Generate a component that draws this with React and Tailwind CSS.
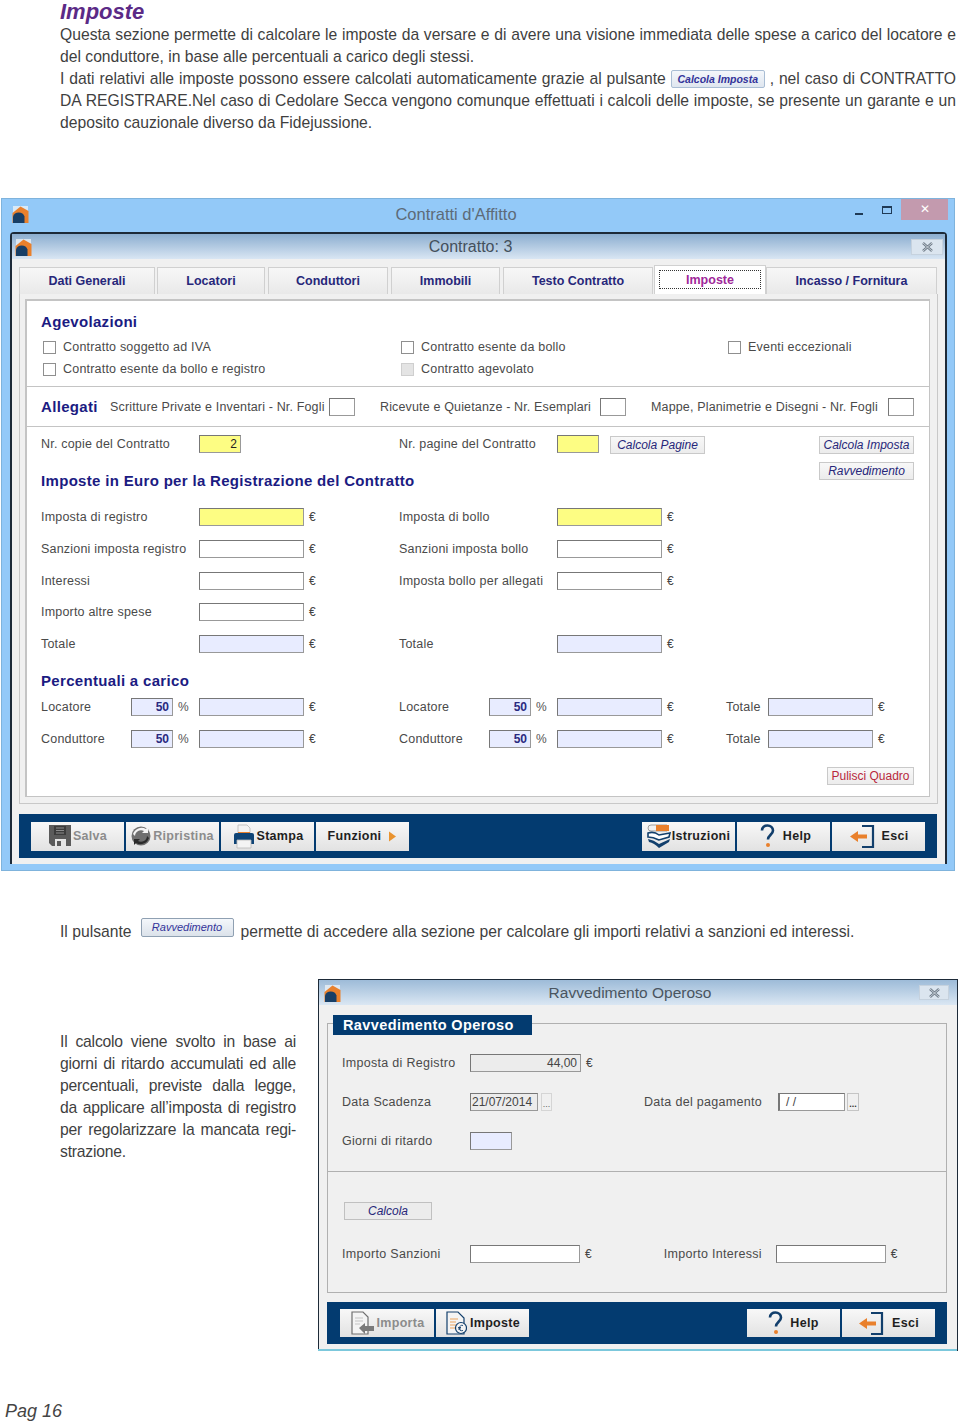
import React from "react";

const Home = () => (
  <svg width="17" height="18" viewBox="0 0 17 18" className="shrink-0">
    <path d="M1 1h15v16H1z" fill="#eef3f8" opacity="0.75" />
    <path d="M0.5 8 8.5 1.5 16.5 6V18H0.5Z" fill="#e9802c" />
    <path d="M1 18v-6.5a6 5.5 0 0 1 11.5 0V18Z" fill="#173e66" />
  </svg>
);

const Floppy = () => (
  <svg width="24" height="24" viewBox="0 0 24 24" className="shrink-0">
    <path d="M1 1h22v21H4l-3-3Z" fill="#5b5b5b" />
    <path d="M6 2h12v9H6Z" fill="#3c3c3c" />
    <path d="M8 4h8M8 6.5h8M8 9h8" stroke="#8c8c8c" strokeWidth="1" />
    <path d="M7 15h11v7H7Z" fill="#e6e6e6" />
    <path d="M9 17h4v5H9Z" fill="#5b5b5b" />
  </svg>
);

const Refresh = () => (
  <svg width="20" height="24" viewBox="0 0 20 24" className="shrink-0">
    <circle cx="10" cy="12" r="9.5" fill="#6f6f6f" />
    <path d="M4 12a6 6 0 0 1 9-5l-2 2h6V3l-2 2A9 9 0 0 0 2 10Z" fill="#f4f4f4" />
    <path d="M16 12a6 6 0 0 1-9 5l2-2H3v6l2-2a9 9 0 0 0 13-5Z" fill="#2b2b2b" />
  </svg>
);

const Printer = () => (
  <svg width="24" height="25" viewBox="0 0 24 25" className="shrink-0">
    <path d="M6 1h9l3 3v6H6Z" fill="#f4f4f4" stroke="#b9b9b9" strokeWidth="0.8" />
    <path d="M6 8h12v3H6Z" fill="#e9802c" />
    <path d="M2 11q0-2 2-2h16q2 0 2 2v9H2Z" fill="#0f4476" />
    <path d="M5 16h14v8H5Z" fill="#f4f4f4" stroke="#b9b9b9" strokeWidth="0.8" />
  </svg>
);

const Books = () => (
  <svg width="24" height="25" viewBox="0 0 24 25" className="shrink-0">
    <path d="M1 4q0-3 3-3h16v6H4Q1 7 1 4Z" fill="#f1f1f1" stroke="#8a8a8a" strokeWidth="0.8" />
    <path d="M9 1h13v6H9Z" fill="#e9802c" />
    <path d="M1 9q6-2 11 2l11-2-1 4-10 3Q6 13 1 13Z" fill="#ffffff" stroke="#123f6c" strokeWidth="1.6" />
    <path d="M1 15q6 1 11 5l11-5-1 3-10 6Q7 19 2 18Z" fill="#123f6c" />
  </svg>
);

const Question = () => (
  <svg width="15" height="24" viewBox="0 0 15 24" className="shrink-0">
    <path d="M2 6.5C2 3 4.5 1.5 7.5 1.5s5.500 2 5.500 5c0 4-5 4.500-5 9" fill="none" stroke="#123f6c" strokeWidth="2.6" />
    <circle cx="8" cy="21" r="2" fill="#e9802c" />
  </svg>
);

const Exit = () => (
  <svg width="26" height="25" viewBox="0 0 26 25" className="shrink-0">
    <path d="M13 2h11v21H13" fill="none" stroke="#123f6c" strokeWidth="2.2" />
    <path d="M1 12.5 9 7v3.5h9v4H9V18Z" fill="#e9802c" />
  </svg>
);

const Arrow = () => (
  <svg width="9" height="11" viewBox="0 0 9 11" className="shrink-0">
    <path d="M1 0.5 8 5.5 1 10.5Z" fill="#e9932f" />
  </svg>
);

const DocImport = () => (
  <svg width="26" height="24" viewBox="0 0 26 24" className="shrink-0">
    <path d="M2 1h11l5 5v17H2Z" fill="#f4f4f4" stroke="#6f6f6f" strokeWidth="1.2" />
    <path d="M5 7h8M5 10h8M5 13h5" stroke="#c4c4c4" strokeWidth="1" />
    <path d="M9 17l6-5v3h9v5h-9v3Z" fill="#7a7a7a" />
  </svg>
);

const DocEuro = () => (
  <svg width="22" height="24" viewBox="0 0 22 24" className="shrink-0">
    <path d="M2 1h11l6 6v16H2Z" fill="#f4f4f4" stroke="#123f6c" strokeWidth="1.2" />
    <path d="M5 8h8M5 11h6M5 14h6M5 17h5" stroke="#e9a45f" strokeWidth="1.2" />
    <circle cx="16" cy="17" r="5.5" fill="#f4f4f4" stroke="#123f6c" strokeWidth="1.2" />
    <path d="M18 14.5q-3-1-3.5 2.5t3.5 2.5M13 16.5h3M13 18h3" fill="none" stroke="#123f6c" strokeWidth="0.9" />
  </svg>
);

const CloseGlyph = () => (
  <svg width="13" height="10" viewBox="0 0 13 10">
    <path d="M2 1 11 9M11 1 2 9" stroke="#6f7c89" strokeWidth="2.4" />
    <path d="M2 1 11 9M11 1 2 9" stroke="#e8eef4" strokeWidth="0.7" />
  </svg>
);

const Input = ({ className = "", children }) => (
  <div
    className={`h-[18px] shrink-0 border border-[#999999] border-t-[#777777] border-l-[#777777] flex items-center justify-end pr-[3px] text-[12px] leading-none ${className}`}
  >
    {children}
  </div>
);

const Euro = () => <span className="ml-[5px] text-[12px] text-[#444444]">€</span>;

const Field = ({ label, labelW = "w-[158px]", bg = "bg-white" }) => (
  <div className="flex items-center">
    <span className={`${labelW} shrink-0 text-[12.5px] tracking-[0.2px] text-[#4a4a4a] whitespace-nowrap`}>{label}</span>
    <Input className={`w-[105px] ${bg}`} />
    <Euro />
  </div>
);

const Percent = ({ label }) => (
  <div className="flex items-center">
    <span className="w-[90px] shrink-0 text-[12.5px] tracking-[0.2px] text-[#4a4a4a]">{label}</span>
    <Input className="w-[42px] bg-[#e8ecff] font-bold text-[#2a2a80]">50</Input>
    <span className="ml-[5px] w-[21px] text-[12px] text-[#555555]">%</span>
    <Input className="w-[105px] bg-[#e8ecff]" />
    <Euro />
  </div>
);

const Check = ({ label, disabled }) => (
  <div className="flex items-center h-[22px] pl-[2px]">
    <span className={`w-[13px] h-[13px] border border-[#8f8f8f] ${disabled ? "bg-[#e4e4e4] border-[#cfcfcf]" : "bg-white"}`} />
    <span className="ml-[7px] text-[12.5px] tracking-[0.2px] text-[#4a4a4a] whitespace-nowrap">{label}</span>
  </div>
);

const SmallBtn = ({ className = "", children }) => (
  <div
    className={`h-[18px] flex items-center justify-center border border-[#c9c9c9] bg-gradient-to-b from-[#f8f8f8] to-[#ececec] text-[12px] italic text-[#27277a] whitespace-nowrap ${className}`}
  >
    {children}
  </div>
);

const Tab = ({ className, children }) => (
  <div
    className={`h-[27px] flex items-center justify-center border border-b-0 border-[#d0d0d0] bg-gradient-to-b from-[#f7f7f7] to-[#e9e9e9] text-[12.5px] font-bold text-[#27277a] ${className}`}
  >
    {children}
  </div>
);

const ToolBtn = ({ icon, label, dim, className = "w-[93px] h-[29px]", gap = "gap-[1px]" }) => (
  <div
    className={`${className} flex items-center justify-center ${gap} bg-gradient-to-b from-[#f8f8f8] to-[#e2e2e2] text-[12.5px] font-bold tracking-[0.3px] ${dim ? "text-[#8c8c8c]" : "text-[#1f1f1f]"}`}
  >
    {icon}
    <span>{label}</span>
    {label === "Funzioni" && <span className="ml-[6px]"><Arrow /></span>}
  </div>
);

const Heading = ({ className = "", children }) => (
  <div className={`h-[20px] flex items-center text-[15px] font-bold tracking-[0.32px] text-[#1b1b82] whitespace-nowrap ${className}`}>
    {children}
  </div>
);

const justifyLine = "h-[22px] text-justify [text-align-last:justify]";

function MainWindow() {
  return (
    <div className="ml-px w-[954px] h-[673px] bg-[#93c9f8] border border-[#7fb3dc] flex flex-col">
      <div className="h-[33px] flex items-center pl-[10px] pb-[4px]">
        <Home />
        <div className="w-[854px] text-center text-[16.5px] text-[#5d6b78]">Contratti d'Affitto</div>
        <span className="ml-[-28px] w-[8px] h-[2px] bg-[#1f3a56]" />
        <span className="ml-[19px] w-[10px] h-[8px] mb-[7px] border border-t-2 border-[#1f3a56]" />
        <span className="ml-[9px] w-[47px] h-[21px] mb-[9px] bg-[#c39aae] flex items-center justify-center text-white text-[12px]">✕</span>
      </div>

      <div className="ml-[8px] w-[937px] h-[632px] border-l-[2px] border-r-[2px] border-t-[2px] border-[#1d2a38] rounded-t-[4px] bg-[#f0f0f0] flex flex-col">
        <div className="h-[25px] shrink-0 bg-gradient-to-b from-[#8caed0] to-[#d9e6f3] flex items-center pl-[3px]">
          <Home />
          <div className="w-[877px] text-center text-[16px] text-[#44505c]">Contratto: 3</div>
          <div className="ml-[2px] w-[32px] h-[16px] bg-[#dbe5ef] border border-[#c6d2de] flex items-center justify-center"><CloseGlyph /></div>
        </div>

        <div className="h-[8px] shrink-0" />
        <div className="flex items-end pl-[7px] h-[27px] shrink-0">
          <Tab className="w-[136px]">Dati Generali</Tab>
          <Tab className="w-[108px] ml-[2px]">Locatori</Tab>
          <Tab className="w-[120px] ml-[3px]">Conduttori</Tab>
          <Tab className="w-[109px] ml-[3px]">Immobili</Tab>
          <Tab className="w-[150px] ml-[3px]">Testo Contratto</Tab>
          <div className="w-[112px] h-[29px] ml-px bg-white border border-b-0 border-[#d0d0d0] p-[4px] pb-[5px]">
            <div className="h-full border border-dotted border-[#333333] flex items-center justify-center text-[12.5px] font-bold text-[#a0289a]">Imposte</div>
          </div>
          <Tab className="w-[171px]">Incasso / Fornitura</Tab>
        </div>

        <div className="ml-[7px] w-[919px] h-[510px] shrink-0 border border-[#c8c8c8] border-t-0 pl-[5px] pr-[7px] pt-[5px]">
          <div className="h-[498px] border-2 border-[#c4c4c4] border-r border-b bg-white">
            <div className="h-[86px] border-b border-[#c4c4c4] pt-[11px] pl-[14px]">
              <Heading>Agevolazioni</Heading>
              <div className="mt-[4px] grid grid-cols-[358px_327px_1fr]">
                <Check label="Contratto soggetto ad IVA" />
                <Check label="Contratto esente da bollo" />
                <Check label="Eventi eccezionali" />
                <Check label="Contratto esente da bollo e registro" />
                <Check label="Contratto agevolato" disabled />
              </div>
            </div>

            <div className="h-[40px] border-b border-[#c4c4c4] pl-[14px] flex items-center text-[12.5px] tracking-[0.15px] text-[#4a4a4a] whitespace-nowrap">
              <Heading className="w-[69px]">Allegati</Heading>
              <span className="w-[219px]">Scritture Private e Inventari - Nr. Fogli</span>
              <Input className="w-[26px] bg-white" />
              <span className="ml-[25px] w-[220px]">Ricevute e Quietanze - Nr. Esemplari</span>
              <Input className="w-[26px] bg-white" />
              <span className="ml-[25px] w-[237px]">Mappe, Planimetrie e Disegni - Nr. Fogli</span>
              <Input className="w-[26px] bg-white" />
            </div>

            <div className="pl-[14px] pr-[14px] pt-[8px]">
              <div className="grid grid-cols-[358px_327px_1fr] grid-rows-[19px]">
                <div className="flex items-start">
                  <span className="w-[158px] text-[12.5px] leading-[18px] tracking-[0.2px] text-[#4a4a4a] whitespace-nowrap">Nr. copie del Contratto</span>
                  <Input className="w-[42px] bg-[#fdfd83] text-[#222222]">2</Input>
                </div>
                <div className="flex items-start">
                  <span className="w-[158px] text-[12.5px] leading-[18px] tracking-[0.2px] text-[#4a4a4a] whitespace-nowrap">Nr. pagine del Contratto</span>
                  <Input className="w-[42px] bg-[#fdfd83]" />
                  <SmallBtn className="ml-[11px] mt-px w-[95px]">Calcola Pagine</SmallBtn>
                </div>
                <div className="flex justify-end items-start pr-px">
                  <SmallBtn className="mt-px w-[95px]">Calcola Imposta</SmallBtn>
                </div>
              </div>
              <div className="mt-[8px] h-[30px] flex justify-between items-start pr-px">
                <Heading className="mt-[9px]">Imposte in Euro per la Registrazione del Contratto</Heading>
                <SmallBtn className="w-[95px]">Ravvedimento</SmallBtn>
              </div>

              <div className="mt-[16px] grid grid-cols-[358px_327px_1fr] auto-rows-[18px] gap-y-[13.75px]">
                <Field label="Imposta di registro" bg="bg-[#fdfd83]" />
                <Field label="Imposta di bollo" bg="bg-[#fdfd83]" />
                <div />
                <Field label="Sanzioni imposta registro" />
                <Field label="Sanzioni imposta bollo" />
                <div />
                <Field label="Interessi" />
                <Field label="Imposta bollo per allegati" />
                <div />
                <Field label="Importo altre spese" />
                <div />
                <div />
                <Field label="Totale" bg="bg-[#e8ecff]" />
                <Field label="Totale" bg="bg-[#e8ecff]" />
                <div />
              </div>

              <Heading className="mt-[18px]">Percentuali a carico</Heading>
              <div className="mt-[7px] grid grid-cols-[358px_327px_1fr] auto-rows-[18px] gap-y-[14px]">
                <Percent label="Locatore" />
                <Percent label="Locatore" />
                <Field label="Totale" labelW="w-[42px]" bg="bg-[#e8ecff]" />
                <Percent label="Conduttore" />
                <Percent label="Conduttore" />
                <Field label="Totale" labelW="w-[42px]" bg="bg-[#e8ecff]" />
              </div>

              <div className="mt-[19px] flex justify-end pr-px">
                <SmallBtn className="w-[87px] not-italic !text-[#b8283c]">Pulisci Quadro</SmallBtn>
              </div>
            </div>
          </div>
        </div>

        <div className="ml-[7px] mt-[10px] w-[918px] h-[44px] bg-[#033b70] flex items-center justify-between px-[12px]">
          <div className="flex gap-[2px]">
            <ToolBtn icon={<Floppy />} label="Salva" dim />
            <ToolBtn icon={<Refresh />} label="Ripristina" dim gap="gap-[2px]" />
            <ToolBtn icon={<Printer />} label="Stampa" />
            <ToolBtn label="Funzioni" />
          </div>
          <div className="flex gap-[2px]">
            <ToolBtn icon={<Books />} label="Istruzioni" />
            <ToolBtn icon={<Question />} label="Help" gap="gap-[8px]" className="w-[93px] h-[29px] pl-[4px]" />
            <ToolBtn icon={<Exit />} label="Esci" gap="gap-[7px]" />
          </div>
        </div>
      </div>
    </div>
  );
}

const Lab = ({ className = "", children }) => (
  <span className={`shrink-0 text-[12.5px] tracking-[0.3px] text-[#4a4a4a] whitespace-nowrap ${className}`}>{children}</span>
);

function SecondWindow() {
  return (
    <div className="w-[640px] h-[372px] border-l-[1.5px] border-t border-r border-[#1d2a38] bg-[#f0f0f0] flex flex-col">
      <div className="h-[25px] shrink-0 bg-gradient-to-b from-[#9dbbd8] to-[#dbe7f3] flex items-center pl-[5px]">
        <Home />
        <div className="w-[578px] text-center text-[15.5px] text-[#4a5560]">Ravvedimento Operoso</div>
        <div className="w-[30px] h-[15px] bg-[#dbe5ef] border border-[#c6d2de] flex items-center justify-center"><CloseGlyph /></div>
      </div>

      <div className="pl-[8px] pr-[10px]">
        <div className="mt-[18px] h-[149px] border border-[#b0b0b0] pl-[14px] flex flex-col relative">
          <div className="absolute left-[5px] top-[-9px] w-[199px] h-[20px] bg-[#033b70] pl-[10px] flex items-center text-white text-[14.5px] font-bold tracking-[0.4px]">
            Ravvedimento Operoso
          </div>
          <div className="mt-[30px] flex items-center h-[17px]">
            <Lab className="w-[128px]">Imposta di Registro</Lab>
            <Input className="w-[111px] bg-[#ececec] text-[#444444] text-[11px]">44,00</Input>
            <Euro />
          </div>
          <div className="mt-[22px] flex items-center h-[18px]">
            <Lab className="w-[128px]">Data Scadenza</Lab>
            <Input className="w-[68px] bg-[#ececec] !justify-start pl-[1px] text-[#444444] text-[11px]">21/07/2014</Input>
            <span className="ml-[3px] w-[11px] h-[18px] border border-[#d5d5d5] flex items-end justify-center text-[9px] leading-[12px] text-[#666666]">...</span>
            <Lab className="ml-[92px] w-[134px]">Data del pagamento</Lab>
            <Input className="w-[67px] bg-white !justify-start pl-[6px] border-l-2 border-l-[#333333] text-[#444444] text-[11px]">/ /</Input>
            <span className="ml-[2px] w-[12px] h-[18px] border border-[#c5c5c5] flex items-end justify-center text-[9px] font-bold leading-[12px] text-[#333333]">...</span>
          </div>
          <div className="mt-[21px] flex items-center h-[18px]">
            <Lab className="w-[128px]">Giorni di ritardo</Lab>
            <Input className="w-[42px] bg-[#e8ecff]" />
          </div>
        </div>

        <div className="h-[121px] border border-t-0 border-[#b0b0b0] pl-[14px] flex flex-col">
          <SmallBtn className="mt-[30px] ml-[2px] w-[88px] !bg-none !bg-[#ececec] !border-[#c0c0c0]">Calcola</SmallBtn>
          <div className="mt-[25px] flex items-center h-[18px]">
            <Lab className="w-[128px]">Importo Sanzioni</Lab>
            <Input className="w-[110px] bg-white" />
            <Euro />
            <Lab className="ml-[72px] w-[112px]">Importo Interessi</Lab>
            <Input className="w-[110px] bg-white" />
            <Euro />
          </div>
        </div>

        <div className="mt-[9px] h-[42px] bg-[#033b70] flex items-center justify-between pl-[13px] pr-[12px]">
          <div className="flex gap-[2px]">
            <ToolBtn icon={<DocImport />} label="Importa" dim className="w-[94px] h-[28px]" />
            <ToolBtn icon={<DocEuro />} label="Imposte" className="w-[93px] h-[28px]" gap="gap-[3px]" />
          </div>
          <div className="flex gap-[2px]">
            <ToolBtn icon={<Question />} label="Help" className="w-[93px] h-[28px]" gap="gap-[7px]" />
            <ToolBtn icon={<Exit />} label="Esci" className="w-[93px] h-[28px]" gap="gap-[8px]" />
          </div>
        </div>
      </div>
      <div className="mt-auto h-[2px] bg-[#7cc8dc] ml-[-1px]" />
    </div>
  );
}

export default function App() {
  return (
    <div className="w-[960px] h-[1422px] overflow-hidden bg-white font-['Liberation_Sans',Arial,sans-serif] text-[15.7px] leading-[22px] text-[#3f3f3f]">
      <div className="pl-[60px] pr-[4px]">
        <h1 className="h-[24px] text-[22px] leading-[24px] font-bold italic text-[#5b2a86]">Imposte</h1>
        <p className={justifyLine}>Questa sezione permette di calcolare le imposte da versare e di avere una visione immediata delle spese a carico del locatore e</p>
        <p className="h-[22px]">del conduttore, in base alle percentuali a carico degli stessi.</p>
        <p className={justifyLine}>
          I dati relativi alle imposte possono essere calcolati automaticamente grazie al pulsante{" "}
          <span className="inline-flex align-[1px] w-[94px] h-[18px] items-center justify-center rounded-[2px] border border-[#a9bdd4] bg-gradient-to-b from-[#f4f7fb] to-[#dfe6ef] text-[10.5px] leading-none italic font-bold text-[#33339a]">Calcola Imposta</span>{" "}
          , nel caso di CONTRATTO
        </p>
        <p className={justifyLine}>DA REGISTRARE.Nel caso di Cedolare Secca vengono comunque effettuati i calcoli delle imposte, se presente un garante e un</p>
        <p className="h-[22px]">deposito cauzionale diverso da Fidejussione.</p>
      </div>

      <div className="mt-[64px]">
        <MainWindow />
      </div>

      <div className="mt-[47px] h-[28px] pl-[60px] flex items-center">
        <span>Il pulsante</span>
        <span className="ml-[9px] self-start w-[93px] h-[19px] flex items-center justify-center rounded-[2px] border border-[#8fa0b2] bg-gradient-to-b from-[#f4f7fb] to-[#dbe2ea] text-[11px] leading-none italic text-[#33339a]">Ravvedimento</span>
        <span className="ml-[7px]">permette di accedere alla sezione per calcolare gli importi relativi a sanzioni ed interessi.</span>
      </div>

      <div className="mt-[33px] flex">
        <div className="w-[318px] shrink-0 pl-[60px] pr-[22px] pt-[52px] tracking-[-0.2px]">
          <p className={justifyLine}>Il calcolo viene svolto in base ai</p>
          <p className={justifyLine}>giorni di ritardo accumulati ed alle</p>
          <p className={justifyLine}>percentuali, previste dalla legge,</p>
          <p className={justifyLine}>da applicare all’imposta di registro</p>
          <p className={justifyLine}>per regolarizzare la mancata regi-</p>
          <p className="h-[22px]">strazione.</p>
        </div>
        <SecondWindow />
      </div>

      <div className="mt-[50px] pl-[5px] text-[18px] leading-[21px] italic text-[#444444]">Pag 16</div>
    </div>
  );
}
